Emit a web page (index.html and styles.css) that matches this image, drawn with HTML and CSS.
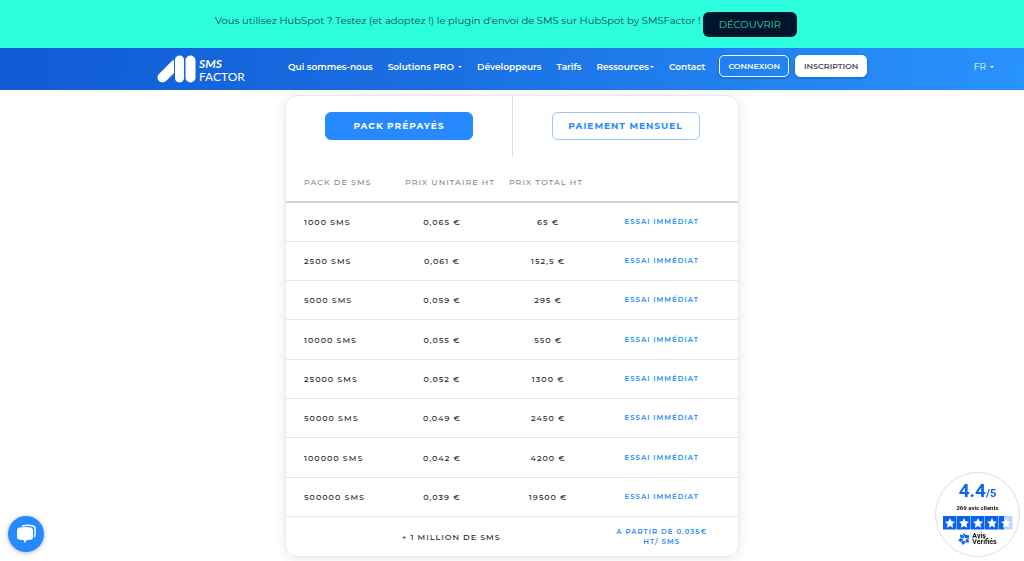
FILE: index.html
```html
<!DOCTYPE html>
<html lang="fr">
<head>
<meta charset="utf-8">
<meta name="viewport" content="width=device-width, initial-scale=1">
<title>Tarifs - SMSFactor</title>
<link rel="stylesheet" href="styles.css">
</head>
<body>
<aside class="banner">
  <p class="banner-text">Vous utilisez HubSpot ? Testez (et adoptez !) le plugin d'envoi de SMS sur HubSpot by SMSFactor !</p>
  <a class="banner-link" href="#hubspot">DÉCOUVRIR</a>
</aside>
<header class="header">
  <a class="logo" href="#accueil" aria-label="SMS Factor">
    <svg class="logo-mark" viewBox="0 0 40 28" aria-hidden="true">
      <path d="M5.500 22.500 L18 10" stroke="#fff" stroke-width="10" stroke-linecap="round"/>
      <rect x="17.500" y="0" width="10" height="28" rx="5" fill="#fff" stroke="#1a66db" stroke-width="1"/>
      <rect x="28.500" y="0.500" width="10" height="27" rx="5" fill="#fff"/>
    </svg>
    <span class="logo-name"><strong class="logo-sms">SMS</strong><span>FACTOR</span></span>
  </a>
  <nav class="nav" aria-label="Navigation principale">
    <a href="#qui">Qui sommes-nous</a>
    <a class="has-menu has-space" href="#solutions">Solutions PRO</a>
    <a href="#dev">Développeurs</a>
    <a href="#tarifs">Tarifs</a>
    <a class="has-menu" href="#ressources">Ressources</a>
    <a href="#contact">Contact</a>
  </nav>
  <div class="account">
    <a class="account-link" href="#connexion">CONNEXION</a>
    <a class="account-link solid" href="#inscription">INSCRIPTION</a>
  </div>
  <button class="lang has-menu has-space" type="button">FR</button>
</header>
<main class="page">
  <section class="card">
    <div class="tabs">
      <div class="tab"><button class="tab-button active" type="button">PACK PRÉPAYÉS</button></div>
      <div class="tab"><button class="tab-button" type="button">PAIEMENT MENSUEL</button></div>
    </div>
    <table class="prices">
      <colgroup><col class="col-pack"><col class="col-unit"><col class="col-total"><col class="col-try"></colgroup>
      <thead><tr><th scope="col">PACK DE SMS</th><th scope="col">PRIX UNITAIRE HT</th><th scope="col">PRIX TOTAL HT</th><td></td></tr></thead>
      <tbody>
        <tr><td>1000 SMS</td><td>0,065 €</td><td>65 €</td><td><a href="#essai">ESSAI IMMÉDIAT</a></td></tr>
        <tr><td>2500 SMS</td><td>0,061 €</td><td>152,5 €</td><td><a href="#essai">ESSAI IMMÉDIAT</a></td></tr>
        <tr><td>5000 SMS</td><td>0,059 €</td><td>295 €</td><td><a href="#essai">ESSAI IMMÉDIAT</a></td></tr>
        <tr><td>10000 SMS</td><td>0,055 €</td><td>550 €</td><td><a href="#essai">ESSAI IMMÉDIAT</a></td></tr>
        <tr><td>25000 SMS</td><td>0,052 €</td><td>1300 €</td><td><a href="#essai">ESSAI IMMÉDIAT</a></td></tr>
        <tr><td>50000 SMS</td><td>0,049 €</td><td>2450 €</td><td><a href="#essai">ESSAI IMMÉDIAT</a></td></tr>
        <tr><td>100000 SMS</td><td>0,042 €</td><td>4200 €</td><td><a href="#essai">ESSAI IMMÉDIAT</a></td></tr>
        <tr><td>500000 SMS</td><td>0,039 €</td><td>19500 €</td><td><a href="#essai">ESSAI IMMÉDIAT</a></td></tr>
        <tr class="large"><td colspan="3">+ 1 MILLION DE SMS</td><td><a href="#devis">A PARTIR DE 0.035€<br>HT/ SMS</a></td></tr>
      </tbody>
    </table>
  </section>
</main>
<button class="chat" type="button" aria-label="Ouvrir le chat">
  <svg viewBox="0 0 36 36" aria-hidden="true">
    <path d="M14 10 Q20 8.500 25 10 Q27 10.500 27 13 V18 Q27 20 26 21" fill="none" stroke="#fff" stroke-width="1.500"/>
    <path d="M11.500 11.500 Q17.500 10.500 23 11.500 Q25 12 25 14 V21 Q25 23.500 23 23.700 L19 24 L16.500 27 L15.500 24 L11.500 23.700 Q9 23.500 9 21 V14 Q9 12 11.500 11.500Z" fill="#fff"/>
  </svg>
</button>
<a class="rating" href="#avis" aria-label="4.4 sur 5, 269 avis clients">
  <span class="score">4.4<small>/5</small></span>
  <span class="count">269 avis clients</span>
  <svg class="stars" viewBox="0 0 70 14" aria-hidden="true">
    <defs><path id="star" d="M7 2 L8.500 5.300 L12 5.700 L9.400 8.100 L10.100 11.700 L7 9.900 L3.900 11.700 L4.600 8.100 L2 5.700 L5.500 5.300Z" fill="#fff"/></defs>
    <path d="M0 0h13.500v13.500H0zM14 0h13.500v13.500H14zM28 0h13.500v13.500H28zM42 0h13.500v13.500H42zM56 0h5v13.500h-5z" fill="#0a62f5"/>
    <path d="M61 0h8.500v13.500H61z" fill="#bdd4ff"/>
    <use href="#star"/><use href="#star" x="14"/><use href="#star" x="28"/><use href="#star" x="42"/><use href="#star" x="56"/>
  </svg>
  <span class="verified">
    <svg class="verified-mark" viewBox="0 0 12 12" aria-hidden="true">
      <path d="M5 0 L8 2 L11.500 2.500 L10.500 6 L11 9.500 L7.500 9.500 L5 12 L3 9 L0 7.500 L2.500 5 L2 1.500 L5 2Z" fill="#0a62f5"/>
      <path d="M6.500 3.500 L7.300 5.200 L9 5.500 L7.700 6.700 L8 8.500 L6.500 7.600 L4.800 8.500 L5.200 6.700 L4 5.500 L5.800 5.200Z" fill="#fff"/>
      <path d="M5 2 L6.500 4 M10.500 6 L8 5.500 M7.500 9.500 L7 7.500 M3 9 L5 7.500 M2.500 5 L5 5.500" stroke="#fff" stroke-width=".6"/>
    </svg>
    <span>Avis<br>Vérifiés</span>
  </span>
</a>
</body>
</html>
```
FILE: styles.css
```css
* { box-sizing: border-box; }

body {
  margin: 0;
  background: #fff;
  color: #222;
  font-family: Montserrat, Inter, "Liberation Sans", sans-serif;
}

a { color: inherit; text-decoration: none; }
button { font-family: inherit; cursor: pointer; }

.banner {
  display: flex;
  justify-content: center;
  align-items: center;
  gap: 2px;
  min-height: 48px;
  padding-right: 12px;
  background: #2dffde;
}
.banner-text {
  margin: 0;
  padding-bottom: 8px;
  color: #0b4a50;
  font-size: 10px;
}
.banner-link {
  padding: 0 16px;
  border-radius: 6px;
  background: #00142a;
  color: #2dd9c4;
  font-size: 10px;
  line-height: 25px;
}

.header {
  display: flex;
  align-items: center;
  min-height: 42px;
  padding: 0 30px 0 157px;
  background: linear-gradient(100deg, #105bd4, #1a70e3 45%, #2993fd);
  color: #fff;
}
.logo {
  display: flex;
  align-items: center;
  gap: 2px;
  width: 131px;
}
.logo-mark { width: 40px; height: 28px; }
.logo-name {
  display: grid;
  padding-top: 2px;
  font-family: Lato, "Open Sans", sans-serif;
  font-size: 12px;
  line-height: 13px;
}
.logo-sms { font-style: italic; }
.nav {
  display: flex;
  gap: 15px;
  padding-bottom: 6px;
  font-size: 9px;
  font-weight: 600;
  white-space: nowrap;
}
.has-menu::after {
  content: "";
  display: inline-block;
  margin-left: 1px;
  border: 2px solid transparent;
  border-top-color: currentColor;
  border-bottom: 0;
  vertical-align: 2px;
}
.has-space::after { margin-left: 4px; }
.account {
  display: flex;
  gap: 6px;
  margin-left: 14px;
  padding-bottom: 6px;
}
.account-link {
  padding: 0 8px;
  border: 1px solid #fff;
  border-radius: 5px;
  box-shadow: 0 1px 3px #0b459680;
  font-size: 8px;
  font-weight: 600;
  line-height: 20px;
}
.account-link.solid { background: #fff; color: #54435b; }
.lang {
  margin-left: auto;
  padding: 0 0 6px;
  border: 0;
  background: none;
  color: #fff;
  font-size: 9px;
}

.page { padding: 5px 16px; }
.card {
  max-width: 454px;
  margin: 0 auto;
  overflow: hidden;
  border: 1px solid #e9e9e9;
  border-radius: 12px;
  box-shadow: 0 1px 12px #00000018;
}
.tabs { display: grid; grid-template-columns: 1fr 1fr; }
.tab {
  display: flex;
  justify-content: center;
  padding: 16px 0;
}
.tab + .tab { border-left: 1px solid #ddd; }
.tab-button {
  width: 148px;
  padding: 0;
  border: 1px solid #9fc4ff;
  border-radius: 6px;
  background: #fff;
  color: #2789ff;
  font-size: 9px;
  font-weight: 700;
  line-height: 26px;
  letter-spacing: 1px;
}
.tab-button.active { border-color: #2789ff; background: #2789ff; color: #fff; }

.prices {
  width: 100%;
  height: 400px;
  border-collapse: collapse;
  table-layout: fixed;
  font-size: 8px;
  font-weight: 500;
  letter-spacing: 1px;
}
.col-pack, .col-unit { width: 23%; }
.col-total { width: 24%; }
.col-try { width: 30%; }
.prices th, .prices td { padding: 0; text-align: center; white-space: nowrap; }
.prices thead tr { height: 46px; }
.prices tbody tr { height: 39px; }
.prices th {
  padding: 6px 0 0 15px;
  color: #888;
  font-weight: 500;
  text-align: left;
}
.prices th:first-child, .prices td:first-child { padding-left: 18px; text-align: left; }
.prices tbody { border-top: 2px solid #d0d3d4; }
.prices tbody tr + tr { border-top: 1px solid #e3e5e6; }
.prices td:last-child { padding-right: 17px; }
.prices a {
  display: block;
  color: #2789ff;
  font-size: 7px;
  font-weight: 600;
  line-height: 10px;
}
.prices .large td:first-child { padding-left: 14px; text-align: center; }

.chat {
  position: fixed;
  left: 8px;
  bottom: 9px;
  width: 36px;
  height: 36px;
  padding: 0;
  border: 0;
  border-radius: 50%;
  background: #2789ff;
  box-shadow: 0 1px 5px #0004;
}
.chat svg { display: block; }

.rating {
  position: fixed;
  right: 4px;
  bottom: 4px;
  display: flex;
  flex-direction: column;
  align-items: center;
  width: 85px;
  height: 85px;
  padding-top: 8px;
  border: 1px solid #ddd;
  border-radius: 50%;
  background: #fff;
  color: #111;
  font-family: Roboto, sans-serif;
  font-weight: 700;
}
.score { color: #0a62f5; font-size: 19px; line-height: 20px; }
.score small { font-size: 11px; }
.count { font-size: 6px; line-height: 8px; }
.stars { width: 70px; height: 14px; margin-top: 4px; flex: none; }
.verified {
  display: flex;
  align-items: center;
  gap: 2px;
  margin-top: 3px;
  font-size: 7px;
  line-height: 6px;
}
.verified-mark { width: 12px; height: 12px; }
```
